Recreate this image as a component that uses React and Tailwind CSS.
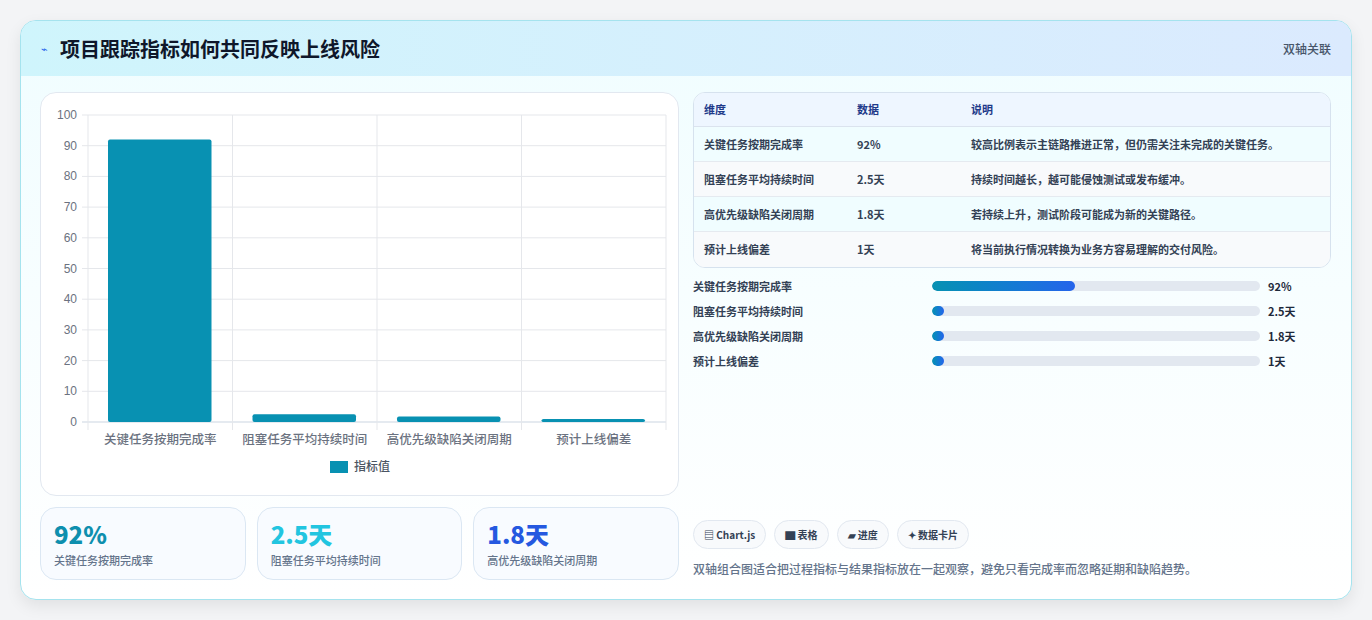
import React from "react";

const F = { fontFamily: '"Noto Sans CJK SC","Noto Sans",sans-serif' };
const cats = ["关键任务按期完成率", "阻塞任务平均持续时间", "高优先级缺陷关闭周期", "预计上线偏差"];
const vals = [92, 2.5, 1.8, 1];

function Chart() {
  const x0 = 47, x1 = 625, yTop = 22, yBot = 329;
  const cw = (x1 - x0) / 4;
  const ys = [0, 10, 20, 30, 40, 50, 60, 70, 80, 90, 100];
  const y = (v) => yBot - (v / 100) * (yBot - yTop);
  return (
    <svg width="639" height="404" className="block">
      {ys.map((v) => (
        <g key={v}>
          <line x1={x0 - 6} x2={x1} y1={y(v)} y2={y(v)} stroke={v === 0 ? "#cbd5e1" : "#e5e7eb"} />
          <text x={x0 - 11} y={y(v) + 4} textAnchor="end" fontSize="12" fill="#6b7280" fontFamily="Liberation Sans, sans-serif">{v}</text>
        </g>
      ))}
      {[0, 1, 2, 3, 4].map((i) => (
        <line key={i} x1={x0 + i * cw} x2={x0 + i * cw} y1={yTop} y2={yBot + 8} stroke="#e5e7eb" />
      ))}
      {vals.map((v, i) => (
        <rect key={i} x={x0 + i * cw + 20} width={cw - 41} y={y(v)} height={yBot - y(v)} rx="2" fill="#0891b2" />
      ))}
      {cats.map((c, i) => (
        <text key={c} x={x0 + i * cw + cw / 2} y={351} textAnchor="middle" fontSize="12.5" fontWeight="500" fill="#6b7280" style={F}>{c}</text>
      ))}
      <rect x="289" y="368" width="18" height="12" fill="#0891b2" />
      <text x="313" y="378" fontSize="12" fontWeight="500" fill="#4b5563" style={F}>指标值</text>
    </svg>
  );
}

export default function App() {
  const rows = [
    ["关键任务按期完成率", "92%", "较高比例表示主链路推进正常，但仍需关注未完成的关键任务。"],
    ["阻塞任务平均持续时间", "2.5天", "持续时间越长，越可能侵蚀测试或发布缓冲。"],
    ["高优先级缺陷关闭周期", "1.8天", "若持续上升，测试阶段可能成为新的关键路径。"],
    ["预计上线偏差", "1天", "将当前执行情况转换为业务方容易理解的交付风险。"],
  ];
  return (
    <div className="w-[1372px] h-[620px] bg-[#f3f4f6] pt-5 pl-5" style={F}>
      <div className="w-[1332px] h-[580px] rounded-2xl border border-[#a5e3ee] bg-gradient-to-b from-[#f0fdff] to-white overflow-hidden shadow-[0_6px_16px_rgba(0,0,0,0.08)]">
        <div className="h-[55px] flex items-center justify-between px-5 bg-gradient-to-r from-[#cff5fc] to-[#dbeafe]">
          <div className="flex items-center gap-3">
            <span className="text-[#2563eb] text-[11px]">⌁</span>
            <span className="text-[20px] font-bold text-[#0f172a]">项目跟踪指标如何共同反映上线风险</span>
          </div>
          <span className="text-[12px] font-medium text-[#475569]">双轴关联</span>
        </div>
        <div className="flex gap-[14px] pl-[19px] pr-5 pt-4">
          <div className="w-[639px] flex flex-col gap-[11px]">
            <div className="h-[404px] rounded-2xl border border-[#e2e8f0] bg-white"><Chart /></div>
            <div className="grid grid-cols-3 gap-[11px]">
              {[["92%", "text-[#0e8fae]", cats[0]], ["2.5天", "text-[#22c5e0]", cats[1]], ["1.8天", "text-[#2558e0]", cats[2]]].map(([v, c, l]) => (
                <div key={l} className="h-[73px] rounded-2xl border border-[#dbe7f3] bg-[#f8fbff] px-[13px] pt-[11px]">
                  <div className={`text-[24px] font-extrabold leading-[30px] ${c}`}>{v}</div>
                  <div className="text-[11px] font-medium text-[#64748b] mt-[3px]">{l}</div>
                </div>
              ))}
            </div>
          </div>
          <div className="w-[640px] flex flex-col">
            <div className="rounded-xl border border-[#d6e2ee] overflow-hidden bg-white">
              <div className="flex h-[34px] items-center bg-[#eef6ff] text-[11px] font-bold text-[#1e3a8a] border-b border-[#dbe3ee]">
                <div className="w-[163px] pl-[10px]">维度</div><div className="w-[114px]">数据</div><div>说明</div>
              </div>
              {rows.map((r, i) => (
                <div key={r[0]} className={`flex h-[35px] items-center text-[11px] font-semibold text-[#334155] ${i < 3 ? "border-b border-[#e5eaf0]" : ""} ${i % 2 ? "bg-[#f8fafc]" : "bg-[#f0fdff]"}`}>
                  <div className="w-[163px] pl-[10px]">{r[0]}</div><div className="w-[114px]">{r[1]}</div><div>{r[2]}</div>
                </div>
              ))}
            </div>
            <div className="flex flex-col gap-[11px] mt-[11px]">
              {rows.map((r, i) => (
                <div key={r[0]} className="flex items-center h-[14px] text-[11px] font-semibold text-[#334155]">
                  <div className="w-[239px]">{r[0]}</div>
                  <div className="w-[328px] h-[10px] rounded-full bg-[#e2e8f0] overflow-hidden">
                    <div className="h-full rounded-full bg-gradient-to-r from-[#0891b2] to-[#2563eb]" style={{ width: i === 0 ? "43.5%" : "12px" }} />
                  </div>
                  <div className="ml-2 font-bold text-[#1e293b]">{r[1]}</div>
                </div>
              ))}
            </div>
            <div className="flex gap-[8px] mt-[152px]">
              {["▤ Chart.js", "▇ 表格", "▰ 进度", "✦ 数据卡片"].map((t) => (
                <div key={t} className="h-[29px] px-[10px] flex items-center rounded-full border border-[#e2e8f0] bg-[#f8fafc] text-[10px] font-bold text-[#334155]">{t}</div>
              ))}
            </div>
            <div className="mt-[11px] text-[12px] font-medium text-[#64748b]">双轴组合图适合把过程指标与结果指标放在一起观察，避免只看完成率而忽略延期和缺陷趋势。</div>
          </div>
        </div>
      </div>
    </div>
  );
}
